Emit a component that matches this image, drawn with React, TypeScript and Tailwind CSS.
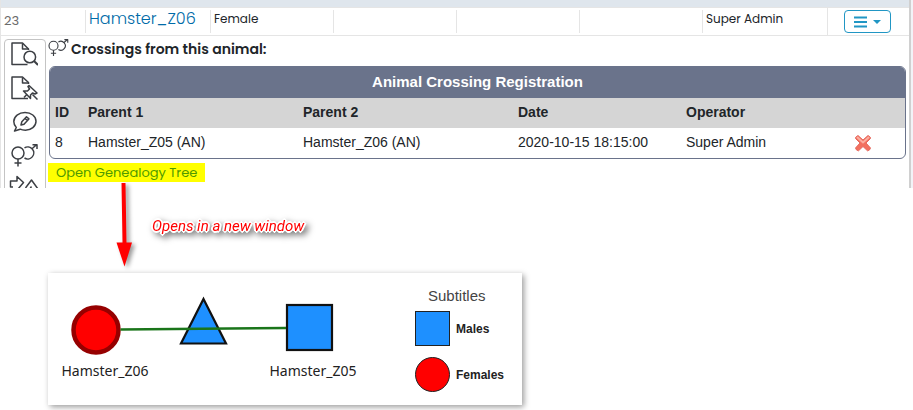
import type { ReactNode } from 'react';

const registrations = [
  {
    id: 8,
    parent1: 'Hamster_Z05 (AN)',
    parent2: 'Hamster_Z06 (AN)',
    date: '2020-10-15 18:15:00',
    operator: 'Super Admin',
  },
];

function LineIcon({ className, viewBox, children }: { className: string; viewBox: string; children: ReactNode }) {
  return (
    <svg
      className={className}
      viewBox={viewBox}
      fill="none"
      stroke="#3c3f44"
      strokeWidth="1.5"
      strokeLinejoin="round"
      aria-hidden="true"
    >
      {children}
    </svg>
  );
}

function FileSearchIcon() {
  return (
    <LineIcon className="h-6 w-7" viewBox="0 0 28 24">
      <path d="M17.500 22.500H2V1H12.500L18.500 7V8" />
      <path d="M12.500 1.500V7H18.500" />
      <circle cx="19.800" cy="15" r="5.800" />
      <path d="M24 19L28 23" strokeWidth="2" />
    </LineIcon>
  );
}

function FilePinIcon() {
  return (
    <LineIcon className="h-6 w-7" viewBox="0 0 28 24">
      <path d="M18 22.500H2V1H12.500L18.500 6.500V8" />
      <path d="M12.500 1.500V7H18.500" />
      <path d="M19 9.500L27 17L25 18L22.500 17L20.500 19L20.500 22.500L13.500 15L17.500 15L19.500 13L18 10.500Z" />
      <path d="M22.500 18.500L27.500 23.500M16.800 18.500L14 21.500" />
    </LineIcon>
  );
}

function CommentIcon() {
  return (
    <LineIcon className="h-6 w-7" viewBox="0 0 28 24">
      <path d="M6.300 17.500C4.800 16 3.800 14 3.800 11.500C3.800 6.500 8.800 2.500 15 2.500C21.200 2.500 26 6.300 26 11.300C26 16.500 21.200 20.200 15.500 20.200C13.500 20.200 11.700 20 10.200 19.200L4.500 21Z" />
      <path d="M11 15L11.800 11.800L16.500 6.800L18.900 8.900L14 14.200ZM15 8.400L17.300 10.500" />
    </LineIcon>
  );
}

function GenderIcon({ className }: { className: string }) {
  return (
    <LineIcon className={className} viewBox="0 0 28 24">
      <circle cx="8" cy="9" r="6" />
      <path d="M8 15V22.500M4.500 19H11.500" />
      <path d="M14.500 3.900A6 6 0 1 1 14.500 14" />
      <path d="M22 4.700L26.500 0.800M22.500 0.800H27V5" />
    </LineIcon>
  );
}

function ShuffleIcon() {
  return (
    <LineIcon className="h-6 w-7 overflow-visible" viewBox="0 0 28 24">
      <path d="M3 9H0.500V3H7V-1.500L13.500 4.500L8 11" />
      <path d="M15.500 10L21.500 2L28 11M18.500 13L21.500 8.500" />
    </LineIcon>
  );
}

function DeleteIcon() {
  return (
    <svg className="h-[18px] w-[18px]" viewBox="0 0 18 18" aria-hidden="true">
      <path
        d="M1.500 4.500Q1 3 4 1.500L9 6L14 1.500Q17 3 16.500 4.500L12 9L16.500 14Q16 16.500 13.500 16.800L9 12.500L4.500 16.800Q2 16.500 1.500 14L6 9Z"
        fill="#f2705f"
        stroke="#e5695e"
        strokeLinejoin="round"
      />
      <path d="M3.500 3.500L9 8.500L14.500 3.500" fill="none" stroke="#fbaea0" strokeWidth="2" strokeLinecap="round" />
    </svg>
  );
}

function AnimalRow() {
  return (
    <div className="flex h-7 border-b border-[#e5e5e5] text-[12px] text-[#212529]">
      <div className="w-[84px] pt-[3px] pl-[3px] text-[13px] text-[#6b6b6b]">23</div>
      <div className="my-0.5 w-[125px] border-l border-[#e5e5e5] pl-[3px]">
        <a href="#animal" className="block text-[16px] leading-[18px] font-light text-[#006ba8]">
          Hamster_Z06
        </a>
      </div>
      <div className="my-0.5 w-[123px] border-l border-[#e5e5e5] pl-[3px] leading-[18px]">Female</div>
      <div className="my-0.5 w-[123px] border-l border-[#e5e5e5]" />
      <div className="my-0.5 w-[123px] border-l border-[#e5e5e5]" />
      <div className="my-0.5 w-[123px] border-l border-[#e5e5e5]" />
      <div className="my-0.5 w-[125px] border-l border-[#e5e5e5] pl-[3px] leading-[18px]">Super Admin</div>
      <div className="flex flex-1 items-center border-l border-[#e5e5e5] pl-4">
        <button
          type="button"
          aria-label="Actions"
          className="flex h-[23px] w-[47px] items-center justify-center gap-1.5 rounded border border-[#2196c4]"
        >
          <svg className="h-3 w-[13px]" viewBox="0 0 13 12" fill="none" stroke="#2196c4" strokeWidth="2">
            <path d="M0 1.500H13M0 6H13M0 10.500H13" />
          </svg>
          <svg className="h-1 w-2" viewBox="0 0 8 4" fill="#2196c4">
            <path d="M0 0H8L4 4Z" />
          </svg>
        </button>
      </div>
    </div>
  );
}

function Toolbar() {
  const tools = [
    { label: 'View file', icon: <FileSearchIcon /> },
    { label: 'Pinned file', icon: <FilePinIcon /> },
    { label: 'Comment', icon: <CommentIcon /> },
    { label: 'Crossings', icon: <GenderIcon className="h-6 w-7" /> },
    { label: 'Move', icon: <ShuffleIcon /> },
  ];

  return (
    <nav className="flex h-[200px] w-[42px] shrink-0 flex-col items-center gap-2.5 rounded border border-[#c4c4c4] pt-0.5 pr-0.5">
      {tools.map(tool => (
        <button key={tool.label} type="button" aria-label={tool.label}>
          {tool.icon}
        </button>
      ))}
    </nav>
  );
}

function CrossingTable() {
  return (
    <div className="overflow-hidden rounded-md border border-[#6a738b] font-['Liberation_Sans',Arial,sans-serif]">
      <table className="w-full table-fixed text-left text-[14px] leading-5 text-[#212529]">
        <caption className="h-[31px] bg-[#6a738b] text-[15px] leading-[30px] font-bold text-white">
          Animal Crossing Registration
        </caption>
        <thead className="bg-[#d5d5d5]">
          <tr className="h-[30px]">
            <th className="w-[33px] pb-0.5 pl-[5px]">ID</th>
            <th className="w-[215px] pb-0.5 pl-[5px]">Parent 1</th>
            <th className="w-[215px] pb-0.5 pl-[5px]">Parent 2</th>
            <th className="w-[168px] pb-0.5 pl-[5px]">Date</th>
            <th className="w-[168px] pb-0.5 pl-[5px]">Operator</th>
            <th aria-label="Delete" />
          </tr>
        </thead>
        <tbody>
          {registrations.map(row => (
            <tr key={row.id} className="h-[30px]">
              <td className="pb-0.5 pl-[5px]">{row.id}</td>
              <td className="pb-0.5 pl-[5px]">{row.parent1}</td>
              <td className="pb-0.5 pl-[5px]">{row.parent2}</td>
              <td className="pb-0.5 pl-[5px]">{row.date}</td>
              <td className="pb-0.5 pl-[5px]">{row.operator}</td>
              <td className="pl-[5px]">
                <button type="button" aria-label="Delete crossing" className="block">
                  <DeleteIcon />
                </button>
              </td>
            </tr>
          ))}
        </tbody>
      </table>
    </div>
  );
}

function Arrow() {
  return (
    <svg
      className="h-[84px] w-5 overflow-visible drop-shadow-[3px_2px_2px_rgba(0,0,0,0.4)]"
      viewBox="0 0 20 84"
      fill="#ff0000"
      aria-hidden="true"
    >
      <path d="M7.500 0H11.500L12.500 59.500H18L10.500 83.500L2.500 59.500H8.500Z" />
    </svg>
  );
}

function GenealogyCard() {
  return (
    <section className="flex h-[132px] w-[474px] bg-white shadow-[2px_2px_6px_rgba(0,0,0,0.4)]">
      <svg className="h-[132px] w-[340px] font-['Noto_Sans',sans-serif] text-[14px]" viewBox="0 0 340 132">
        <circle cx="48" cy="57" r="22.500" fill="#ff0000" stroke="#960000" strokeWidth="4.500" />
        <path d="M155.500 26L178 70.500H133Z" fill="#1e90ff" stroke="#111111" strokeWidth="2.200" />
        <rect x="239" y="32" width="45" height="45" fill="#1e90ff" stroke="#111111" strokeWidth="2.200" />
        <path d="M72.500 56.500L238 55" stroke="#1a751a" strokeWidth="2.500" />
        <text x="57" y="103" textAnchor="middle" fill="#222222">Hamster_Z06</text>
        <text x="265" y="103" textAnchor="middle" fill="#222222">Hamster_Z05</text>
      </svg>
      <div className="flex-1 pt-[13px] pl-[27px] font-['Liberation_Sans',Arial,sans-serif]">
        <h2 className="pl-[13px] text-[15px] leading-5 text-[#444444]">Subtitles</h2>
        <ul className="mt-[5px] flex flex-col gap-[11px] text-[12px] font-bold text-[#222222]">
          <li className="flex items-center gap-1.5">
            <span className="h-[35px] w-[35px] border border-[#222222] bg-[#1e90ff]" />
            Males
          </li>
          <li className="flex items-center gap-1.5">
            <span className="h-[35px] w-[35px] rounded-full border border-[#222222] bg-[#ff0000]" />
            Females
          </li>
        </ul>
      </div>
    </section>
  );
}

export default function App() {
  return (
    <div className="bg-white font-['Poppins',Inter,sans-serif]">
      <div className="flex h-[188px] overflow-hidden border-l border-[#e5e5e5]">
        <div className="min-w-0 flex-1">
          <div className="h-2 border-b border-[#e5e5e5] bg-[#dfe6ed]" />
          <AnimalRow />
          <div className="flex pt-[3px] pr-[3px] pl-[3px]">
            <Toolbar />
            <div className="min-w-0 flex-1 pl-[3px]">
              <h1 className="-ml-0.5 flex h-[27px] items-start text-[14px] leading-5 font-semibold text-[#212529]">
                <GenderIcon className="mr-0.5 h-[18px] w-[22px]" />
                Crossings from this animal:
              </h1>
              <CrossingTable />
              <div className="mt-1 flex">
                <a href="#tree" className="-ml-px bg-[#ffff00] px-2 text-[13px] leading-[19px] text-[#4f9a00]">
                  Open Genealogy Tree
                </a>
              </div>
            </div>
          </div>
        </div>
        <div className="w-1 border-l-2 border-[#d0d0d0] bg-[#f2f3f7]" />
      </div>
      <div className="relative h-[85px] pl-12">
        {/* the arrow starts over the highlighted link */}
        <div className="absolute -top-[5px] left-[114px]">
          <Arrow />
        </div>
        <p className="pt-7 pl-[104px] font-['Roboto',Arial,sans-serif] text-[15px] leading-5 text-[#ff0000] italic drop-shadow-[3px_3px_3px_rgba(0,0,0,0.5)] [text-shadow:-1px_-1px_0_#fff,1px_-1px_0_#fff,-1px_1px_0_#fff,1px_1px_0_#fff,-2px_0_0_#fff,2px_0_0_#fff,0_2px_0_#fff,0_-2px_0_#fff]">
          Opens in a new window
        </p>
      </div>
      <div className="pb-[5px] pl-12">
        <GenealogyCard />
      </div>
    </div>
  );
}
